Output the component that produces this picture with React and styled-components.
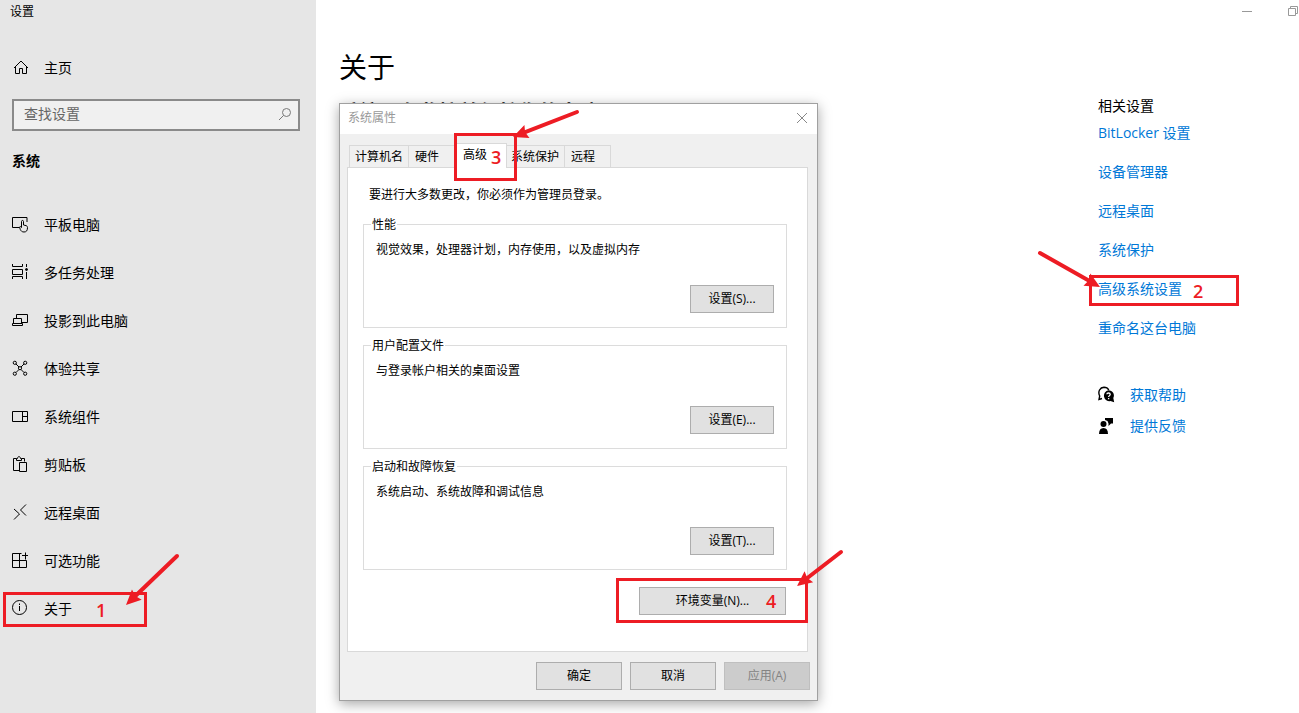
import React, { useState } from "react";
import styled, { createGlobalStyle } from "styled-components";

const RED = "#ed1c24";

const navItems = [
  { id: "tablet", label: "平板电脑" },
  { id: "multitask", label: "多任务处理" },
  { id: "project", label: "投影到此电脑" },
  { id: "share", label: "体验共享" },
  { id: "components", label: "系统组件" },
  { id: "clipboard", label: "剪贴板" },
  { id: "remote", label: "远程桌面" },
  { id: "optional", label: "可选功能" },
  { id: "about", label: "关于" },
];

const relatedLinks = [
  "BitLocker 设置",
  "设备管理器",
  "远程桌面",
  "系统保护",
  "高级系统设置",
  "重命名这台电脑",
];

const tabs = ["计算机名", "硬件", "高级", "系统保护", "远程"];

const groups = [
  {
    title: "性能",
    text: "视觉效果，处理器计划，内存使用，以及虚拟内存",
    button: "设置(S)...",
  },
  {
    title: "用户配置文件",
    text: "与登录帐户相关的桌面设置",
    button: "设置(E)...",
  },
  {
    title: "启动和故障恢复",
    text: "系统启动、系统故障和调试信息",
    button: "设置(T)...",
  },
];

const icons = {
  home: (
    <path d="M2 9 9 2l7 7M3.500 8v6.500h4v-5h3v5h4V8" />
  ),
  tablet: (
    <>
      <path d="M7 11.500H.5v-10h14.500V6" />
      <path d="M9.500 11.500V5.500c0-1.400 2-1.400 2 0V9l2.500.6c1 .3 1.500.9 1.500 1.900 0 3-1 4.500-3.500 4.500-2 0-3-1-3.700-2.500L7.500 11c.7-.8 1.500-.4 2 .5" />
    </>
  ),
  multitask: (
    <>
      <path d="M.5 0v2.500h10V0M.5 5.500h10v5H.5zM.5 15v-2.500h10V15M14.500 0v3M14.500 8v7" />
      <circle cx="14.500" cy="5.500" r="1" fill="currentColor" />
    </>
  ),
  project: (
    <path d="M4.500 6.500v-4h11v8H10M1.500 11.500v-5h8v5M.5 11.500h10v2H.5z" />
  ),
  share: (
    <>
      <path d="M4 4l3 3M12 4 9 7M4 12.500l3-3M12 12.500l-3-3" />
      <circle cx="2.800" cy="2.800" r="1.600" />
      <circle cx="13.200" cy="2.800" r="1.600" />
      <circle cx="8" cy="8.200" r="1.600" />
      <circle cx="2.800" cy="13.700" r="1.600" />
      <circle cx="13.200" cy="13.700" r="1.600" />
    </>
  ),
  components: <path d="M.5 3.500h15v10H.5zM10.500 3.500v10M10.500 8.500h5" />,
  clipboard: (
    <path d="M7.500 14.500h-6v-12h3M9.500 2.500h3v3M4.500 2.500v2h5v-2H8.500c0-2.500-3-2.500-3 0zM7.500 6.500h7v9h-7z" />
  ),
  remote: <path d="M2 5l5.500 5L2 15.500M14 .5L8.500 6l5.500 5.500" />,
  optional: (
    <path d="M9.500 1.500h-9v14h14v-7M.5 8.500h14M7.500 1.500v14M13.500.500v7M10 3.500h6" />
  ),
  about: (
    <>
      <circle cx="7.500" cy="7.500" r="7" />
      <path d="M7.500 6v5M7.500 3.500v1.500" />
    </>
  ),
};

const Icon = ({ name }) => (
  <IconSvg viewBox="0 0 18 18" aria-hidden="true">
    {icons[name]}
  </IconSvg>
);

const HelpIcon = () => (
  <IconSvg viewBox="0 0 18 18" aria-hidden="true">
    <path
      d="M4 12.500l-3 1 .7-3.500C-.5 5.500 2 1.500 6 1.300c2 0 3.800.9 4.800 2.700"
      strokeWidth="1.400"
    />
    <path
      d="M10.500 4.200a5.400 5.400 0 0 1 4.800 7.900l.9 4.100-3.700-1.100a5.500 5.500 0 1 1-2-10.900z"
      fill="currentColor"
      stroke="none"
    />
    <path
      d="M8.800 8.300c.2-1.800 3.400-1.700 3.400.1 0 1.200-1.600 1.300-1.600 2.700M10.600 12v1.300"
      stroke="#fff"
      strokeWidth="1.300"
    />
  </IconSvg>
);

const FeedbackIcon = () => (
  <IconSvg viewBox="0 0 18 18" aria-hidden="true">
    <g fill="currentColor" stroke="none">
      <circle cx="5.500" cy="7" r="3" />
      <path d="M1 17c0-4 1.500-6 4.500-6s4.500 2 4.500 6z" />
      <path d="M7 1h8v5.500h-2L10.500 9V6.500L9.500 4 7 3z" />
    </g>
  </IconSvg>
);

// Red arrow, drawn in the coordinates of the frame it belongs to
const Arrow = ({ from, to }) => {
  const [x1, y1] = from;
  const [x2, y2] = to;
  const length = Math.hypot(x2 - x1, y2 - y1);
  const angle = (Math.atan2(y2 - y1, x2 - x1) * 180) / Math.PI;
  return (
    <ArrowSvg width="1" height="1" aria-hidden="true">
      <g transform={`translate(${x1} ${y1}) rotate(${angle})`}>
        <path
          d={`M0 0H${length - 9}`}
          stroke={RED}
          strokeWidth="4"
          strokeLinecap="round"
        />
        <path d={`M${length} 0l-15 -7l2 7l-2 7z`} fill={RED} />
      </g>
    </ArrowSvg>
  );
};

const App = () => {
  const [activeTab, setActiveTab] = useState("高级");

  return (
    <>
      <GlobalStyle />
      <Window>
        <Sidebar>
          <WindowTitle>设置</WindowTitle>
          <HomeLink href="#home">
            <Icon name="home" />
            主页
          </HomeLink>
          <SearchBox>
            <SearchInput
              type="text"
              placeholder="查找设置"
              aria-label="查找设置"
            />
            <SearchSvg viewBox="0 0 14 14" aria-hidden="true">
              <circle cx="8.500" cy="5.500" r="4" />
              <path d="M5.500 8.500L1 13" />
            </SearchSvg>
          </SearchBox>
          <SectionName>系统</SectionName>
          <NavList>
            {navItems.map((item) => (
              <NavItem key={item.id}>
                <NavLink href={`#${item.id}`}>
                  <Icon name={item.id} />
                  {item.label}
                </NavLink>
                {item.id === "about" && (
                  <AboutMark>
                    1
                    <Arrow from={[171, -39]} to={[120, 10]} />
                  </AboutMark>
                )}
              </NavItem>
            ))}
          </NavList>
        </Sidebar>

        <Main>
          <Controls>
            <ControlButton aria-label="最小化">
              <svg width="10" height="11" stroke="#999" fill="none">
                <path d="M0 5.500h10" />
              </svg>
            </ControlButton>
            <ControlButton aria-label="还原">
              <svg width="10" height="11" stroke="#999" fill="none">
                <path d="M.5 2.500h7v7h-7zM2.500 2.500v-2h7v7h-2" />
              </svg>
            </ControlButton>
          </Controls>
          <Columns>
            <Content>
              <PageTitle>关于</PageTitle>
              <StatusTitle>系统正在监控并保护你的电脑。</StatusTitle>
            </Content>
            <Related>
              <RelatedTitle>相关设置</RelatedTitle>
              <RelatedList>
                {relatedLinks.map((label) => (
                  <RelatedItem key={label}>
                    <BlueLink href="#related">{label}</BlueLink>
                    {label === "高级系统设置" && (
                      <AdvancedMark>
                        2
                        <Arrow from={[-52, -25]} to={[8, 9]} />
                      </AdvancedMark>
                    )}
                  </RelatedItem>
                ))}
              </RelatedList>
              <SupportRow>
                <HelpIcon />
                <BlueLink href="#help">获取帮助</BlueLink>
              </SupportRow>
              <SupportRow>
                <FeedbackIcon />
                <BlueLink href="#feedback">提供反馈</BlueLink>
              </SupportRow>
            </Related>
          </Columns>

          <Dialog role="dialog" aria-labelledby="dialog-title">
            <DialogHeader>
              <DialogTitle id="dialog-title">系统属性</DialogTitle>
              <ControlButton aria-label="关闭">
                <svg width="12" height="12" stroke="#888" fill="none">
                  <path d="M1 1l10 10M11 1L1 11" />
                </svg>
              </ControlButton>
            </DialogHeader>
            <TabBar role="tablist">
              {tabs.map((tab) => (
                <TabSlot key={tab} $active={tab === activeTab}>
                  <Tab
                    role="tab"
                    aria-selected={tab === activeTab}
                    $active={tab === activeTab}
                    onClick={() => setActiveTab(tab)}
                  >
                    {tab}
                  </Tab>
                  {tab === "高级" && (
                    <TabMark>
                      3
                      <Arrow from={[120, -24]} to={[56, 1]} />
                    </TabMark>
                  )}
                </TabSlot>
              ))}
            </TabBar>
            <Panel role="tabpanel">
              <Intro>要进行大多数更改，你必须作为管理员登录。</Intro>
              <Groups>
                {groups.map((group) => (
                  <Group key={group.title}>
                    <GroupTitle>{group.title}</GroupTitle>
                    <GroupBody>
                      <GroupText>{group.text}</GroupText>
                      <Button $width={84}>{group.button}</Button>
                    </GroupBody>
                  </Group>
                ))}
              </Groups>
              <EnvironmentRow>
                <Button $width={147}>环境变量(N)...</Button>
                <EnvironmentMark>
                  4
                  <Arrow from={[222, -29]} to={[178, 5]} />
                </EnvironmentMark>
              </EnvironmentRow>
            </Panel>
            <DialogFooter>
              <Button $width={86}>确定</Button>
              <Button $width={86}>取消</Button>
              <Button $width={86} disabled>
                应用(A)
              </Button>
            </DialogFooter>
          </Dialog>
        </Main>
      </Window>
    </>
  );
};

export default App;

const GlobalStyle = createGlobalStyle`
  * {
    box-sizing: border-box;
  }
  body {
    margin: 0;
    background: #fff;
    color: #000;
    font-family: "Open Sans", "Noto Sans CJK SC", sans-serif;
    font-size: 14px;
    line-height: 20px;
  }
  button,
  input {
    font: inherit;
    color: inherit;
  }
`;

const Window = styled.div`
  display: flex;
  min-height: 100vh;
`;

const Sidebar = styled.aside`
  flex: 0 0 316px;
  background: #e6e6e6;
`;

const WindowTitle = styled.div`
  padding-left: 10px;
  font-size: 12px;
  line-height: 24px;
`;

const IconSvg = styled.svg`
  flex: none;
  width: 18px;
  height: 18px;
  fill: none;
  stroke: currentColor;
`;

const NavLink = styled.a`
  display: flex;
  align-items: center;
  gap: 14px;
  height: 48px;
  padding-left: 12px;
  color: #000;
  text-decoration: none;
`;

const HomeLink = styled(NavLink)`
  margin-top: 20px;
`;

const SearchBox = styled.div`
  display: flex;
  align-items: center;
  height: 32px;
  margin: 7px 16px 16px 12px;
  padding: 0 6px 2px 10px;
  border: 2px solid #8a8a8a;
  background: #f0f0f0;
`;

const SearchInput = styled.input`
  flex: 1;
  min-width: 0;
  padding: 0;
  border: none;
  outline: none;
  background: transparent;
  &::placeholder {
    color: #666;
    opacity: 1;
  }
`;

const SearchSvg = styled.svg`
  width: 14px;
  height: 14px;
  fill: none;
  stroke: #777;
`;

const SectionName = styled.h2`
  margin: 0 0 26px;
  padding-left: 12px;
  font-size: 14px;
  line-height: 28px;
`;

const NavList = styled.ul`
  margin: 0;
  padding: 0;
  list-style: none;
`;

const NavItem = styled.li`
  position: relative;
`;

const Main = styled.main`
  position: relative;
  flex: 1;
  min-width: 0;
`;

const Controls = styled.div`
  display: flex;
  justify-content: flex-end;
  align-items: center;
  gap: 36px;
  height: 22px;
  padding-right: 1px;
`;

const ControlButton = styled.button`
  display: flex;
  padding: 0;
  border: none;
  background: none;
`;

const Columns = styled.div`
  display: flex;
  padding: 25px 0 0 23px;
`;

const Content = styled.section`
  flex: 1;
`;

const PageTitle = styled.h1`
  margin: 0;
  font-size: 28px;
  font-weight: 400;
  line-height: 40px;
`;

const StatusTitle = styled.h2`
  margin: 12px 0 0;
  font-size: 20px;
  line-height: 28px;
`;

const Related = styled.aside`
  flex: 0 0 201px;
  padding-top: 49px;
`;

const RelatedTitle = styled.h2`
  margin: 0;
  font-size: 14px;
  font-weight: 400;
`;

const RelatedList = styled.ul`
  margin: 0 0 22px;
  padding: 7px 0 0;
  list-style: none;
`;

const RelatedItem = styled.li`
  position: relative;
  height: 39px;
`;

const BlueLink = styled.a`
  color: #0078d7;
  text-decoration: none;
`;

const SupportRow = styled.div`
  display: flex;
  align-items: center;
  gap: 14px;
  height: 31px;
`;

const Dialog = styled.section`
  position: absolute;
  top: 103px;
  left: 23px;
  width: 479px;
  border: 1px solid #a0a0a0;
  background: #f0f0f0;
  box-shadow: 0 3px 12px rgba(0, 0, 0, 0.35);
  font-size: 12px;
  line-height: 18px;
`;

const DialogHeader = styled.header`
  display: flex;
  align-items: center;
  justify-content: space-between;
  height: 30px;
  padding: 0 9px 2px 8px;
  background: #fff;
`;

const DialogTitle = styled.h2`
  margin: 0;
  color: #999;
  font-size: 12px;
  font-weight: 400;
  line-height: 20px;
`;

const TabBar = styled.div`
  display: flex;
  align-items: flex-end;
  height: 33px;
  padding-left: 9px;
`;

const TabSlot = styled.div`
  position: relative;
  z-index: ${({ $active }) => ($active ? 2 : 0)};
  margin: ${({ $active }) => ($active ? "0 -2px -1px" : "0")};
`;

const Tab = styled.button`
  display: block;
  min-width: ${({ $active }) => ($active ? "52px" : "48px")};
  height: ${({ $active }) => ($active ? "25px" : "22px")};
  padding: ${({ $active }) => ($active ? "0 7px 2px" : "0 5px 0 6px")};
  border: 1px solid #d9d9d9;
  border-width: ${({ $active }) => ($active ? "1px 1px 0" : "1px 1px 0 0")};
  background: ${({ $active }) => ($active ? "#fff" : "#f0f0f0")};
  text-align: left;
  ${TabSlot}:first-child & {
    border-left-width: 1px;
    padding: 0 5px;
  }
  ${TabSlot}:last-child & {
    min-width: 46px;
  }
`;

const Panel = styled.div`
  margin: 0 9px 0 7px;
  padding: 18px 20px 36px 15px;
  border: 1px solid #d9d9d9;
  background: #fff;
`;

const Intro = styled.p`
  margin: 0 0 12px 6px;
`;

const Groups = styled.div`
  display: grid;
  gap: 9px;
`;

const Group = styled.fieldset`
  min-width: 0;
  margin: 0;
  padding: 0 12px 14px 7px;
  border: 1px solid #dcdcdc;
`;

const GroupTitle = styled.legend`
  padding: 0 1px;
  line-height: 17px;
`;

const GroupBody = styled.div`
  display: flex;
  flex-direction: column;
  align-items: flex-end;
  gap: 26px;
  padding-top: 8px;
`;

const GroupText = styled.p`
  align-self: flex-start;
  margin: 0 0 0 5px;
`;

const Button = styled.button`
  width: ${({ $width }) => $width}px;
  height: 28px;
  padding: 0;
  border: 1px solid #adadad;
  background: #e1e1e1;
  &:disabled {
    border-color: #bfbfbf;
    background: #ccc;
    color: #838383;
  }
`;

const EnvironmentRow = styled.div`
  position: relative;
  display: flex;
  width: fit-content;
  margin: 17px 1px 0 auto;
`;

const DialogFooter = styled.footer`
  display: flex;
  justify-content: flex-end;
  gap: 8px;
  padding: 10px 7px;
`;

/* red frames with their step numbers */
const Mark = styled.span`
  position: absolute;
  z-index: 3;
  display: flex;
  align-items: center;
  border: 3px solid ${RED};
  color: ${RED};
  font-family: "Open Sans", sans-serif;
  font-size: 18px;
  font-weight: 600;
  pointer-events: none;
`;

const AboutMark = styled(Mark)`
  top: 7px;
  left: 3px;
  width: 144px;
  height: 35px;
  padding-left: 90px;
`;

const AdvancedMark = styled(Mark)`
  top: -4px;
  left: -9px;
  width: 150px;
  height: 31px;
  padding-left: 101px;
`;

const TabMark = styled(Mark)`
  top: -10px;
  left: -1px;
  width: 63px;
  height: 48px;
  padding-left: 34px;
`;

const EnvironmentMark = styled(Mark)`
  top: -9px;
  left: -23px;
  width: 192px;
  height: 45px;
  padding-left: 147px;
`;

const ArrowSvg = styled.svg`
  position: absolute;
  top: 0;
  left: 0;
  overflow: visible;
`;
